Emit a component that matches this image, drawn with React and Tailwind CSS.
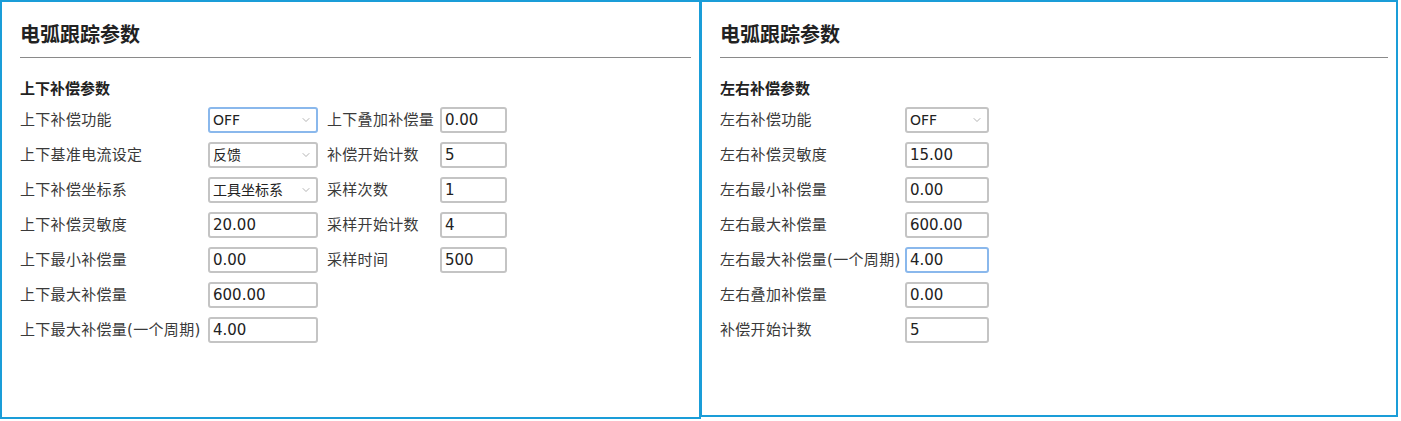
import { ChevronDown } from "lucide-react";

const FONT = { fontFamily: '"DejaVu Sans", "Noto Sans CJK SC", sans-serif' };

function Field({ value, width, focused }) {
  return (
    <div
      className={`h-[26px] ${width} rounded-[3px] border-2 ${
        focused ? "border-[#8ab8ec]" : "border-[#c4c4c4]"
      } bg-white px-[3px] flex items-center text-[15px] text-[#222]`}
    >
      {value}
    </div>
  );
}

function Select({ value, width, focused }) {
  return (
    <div
      className={`h-[26px] ${width} rounded-[3px] border-2 ${
        focused ? "border-[#8ab8ec]" : "border-[#c4c4c4]"
      } bg-white pl-[3px] pr-[4px] flex items-center justify-between text-[14px] text-[#222]`}
    >
      <span>{value}</span>
      <ChevronDown className="w-3 h-3 text-[#999]" strokeWidth={1.5} />
    </div>
  );
}

function Label({ children, width }) {
  return (
    <div className={`${width} shrink-0 text-[15px] tracking-[0.3px] text-[#3a3a3a] leading-[26px] whitespace-nowrap`}>
      {children}
    </div>
  );
}

function Panel({ heading, children, className }) {
  return (
    <div className={`border-2 border-[#1a9dd8] bg-white pl-[18px] pr-[8px] pt-[20px] ${className}`}>
      <div className="text-[20px] font-bold leading-[26px] text-[#222]">电弧跟踪参数</div>
      <div className="mt-[9px] h-[1px] bg-[#8a8a8a]" />
      <div className="mt-[21px] text-[15px] font-bold leading-[20px] text-[#222]">{heading}</div>
      <div className="mt-[8px] flex flex-col gap-[9px]">{children}</div>
    </div>
  );
}

export default function App() {
  const left = [
    ["上下补偿功能", { type: "select", value: "OFF", focused: true }, "上下叠加补偿量", "0.00"],
    ["上下基准电流设定", { type: "select", value: "反馈" }, "补偿开始计数", "5"],
    ["上下补偿坐标系", { type: "select", value: "工具坐标系" }, "采样次数", "1"],
    ["上下补偿灵敏度", { value: "20.00" }, "采样开始计数", "4"],
    ["上下最小补偿量", { value: "0.00" }, "采样时间", "500"],
    ["上下最大补偿量", { value: "600.00" }],
    ["上下最大补偿量(一个周期)", { value: "4.00" }],
  ];
  const right = [
    ["左右补偿功能", { type: "select", value: "OFF" }],
    ["左右补偿灵敏度", { value: "15.00" }],
    ["左右最小补偿量", { value: "0.00" }],
    ["左右最大补偿量", { value: "600.00" }],
    ["左右最大补偿量(一个周期)", { value: "4.00", focused: true }],
    ["左右叠加补偿量", { value: "0.00" }],
    ["补偿开始计数", { value: "5" }],
  ];

  return (
    <div className="flex w-[1401px] h-[421px] bg-white" style={FONT}>
      <Panel heading="上下补偿参数" className="w-[701px] h-[419px]">
        {left.map(([label, ctl, label2, val2]) => (
          <div key={label} className="flex items-center">
            <Label width="w-[188px]">{label}</Label>
            {ctl.type === "select" ? (
              <Select value={ctl.value} width="w-[110px]" focused={ctl.focused} />
            ) : (
              <Field value={ctl.value} width="w-[110px]" />
            )}
            {label2 && (
              <>
                <div className="w-[9px]" />
                <Label width="w-[113px]">{label2}</Label>
                <Field value={val2} width="w-[67px]" />
              </>
            )}
          </div>
        ))}
      </Panel>
      <Panel heading="左右补偿参数" className="-ml-[1px] w-[698px] h-[417px]">
        {right.map(([label, ctl]) => (
          <div key={label} className="flex items-center">
            <Label width="w-[185px]">{label}</Label>
            {ctl.type === "select" ? (
              <Select value={ctl.value} width="w-[84px]" />
            ) : (
              <Field value={ctl.value} width="w-[84px]" focused={ctl.focused} />
            )}
          </div>
        ))}
      </Panel>
    </div>
  );
}
